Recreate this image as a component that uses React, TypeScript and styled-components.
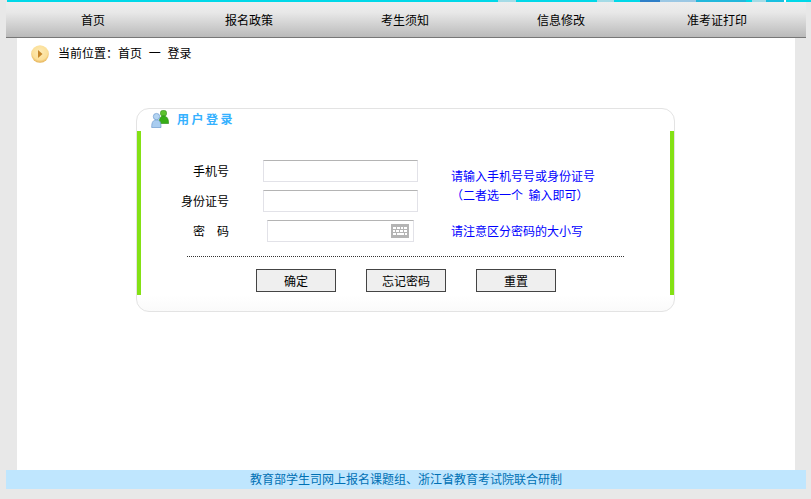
import React from "react";
import styled, { createGlobalStyle } from "styled-components";

const Global = createGlobalStyle`
  html, body { margin: 0; padding: 0; background: #e8e8e8; }
  body { font-family: "Noto Sans CJK SC", "Liberation Sans", sans-serif; font-size: 12px; color: #000; }
`;

const Page = styled.div`
  height: 499px;
  overflow: hidden;
  padding: 0 5px 0 6px;
  display: flex;
  flex-direction: column;
  box-sizing: border-box;
`;

const TopStrip = styled.div`
  height: 2px;
  flex: none;
  margin-right: -5px;
  background: linear-gradient(
    90deg,
    #e8e8e8 0 1px,
    #00d8e8 1px 492px,
    #a4dbe6 492px 510px,
    #00d8e8 510px 591px,
    #a4dbe6 591px 608px,
    #00d8e8 608px 634px,
    #2f7fc8 634px 654px,
    #9cc8e4 654px 690px,
    #22b8dc 690px 740px,
    #00d8e8 740px 746px,
    #a4dbe6 746px 760px,
    #18c0e0 760px 778px,
    #fff 778px 780px,
    #00d8e8 780px
  );
`;

const Nav = styled.nav`
  flex: none;
  height: 35px;
  padding: 0 11px 0 9px;
  display: grid;
  grid-template-columns: repeat(5, 156px);
  background: linear-gradient(180deg, #eeeeee 0, #e8e8e8 30%, #bababa 100%);
  border-bottom: 1px solid #777;
`;

const NavItem = styled.a`
  display: flex;
  align-items: center;
  justify-content: center;
  color: #000;
  font-size: 12px;
`;

const Main = styled.main`
  flex: 1;
  margin: 0 11px;
  background: #fff;
  padding: 7px 0 0 14px;
`;

const Crumb = styled.div`
  display: flex;
  align-items: center;
  gap: 9px;
  height: 18px;
  line-height: 18px;
`;

const CrumbText = styled.span`
  white-space: pre;
  word-spacing: 4px;
  margin-top: -2px;
`;

const Card = styled.section`
  width: 539px;
  height: 204px;
  box-sizing: border-box;
  margin: 45px 0 0 105px;
  border: 1px solid #e3e3e3;
  border-radius: 13px;
  background: linear-gradient(180deg, #fff 0, #fff 92%, #fafafa 100%);
  display: flex;
  flex-direction: column;
`;

const CardHead = styled.header`
  flex: none;
  height: 22px;
  padding: 1px 0 0 14px;
  display: flex;
  align-items: flex-start;
  gap: 8px;
  box-sizing: border-box;
`;

const CardTitle = styled.h2`
  margin: -1px 0 0;
  font-size: 12px;
  line-height: 20px;
  font-weight: 700;
  color: #35b1ff;
  letter-spacing: 2.5px;
`;

const CardBody = styled.div`
  flex: none;
  height: 164px;
  box-sizing: border-box;
  border-left: 4px solid #84e114;
  border-right: 4px solid #84e114;
  padding-top: 29px;
`;

const Form = styled.div`
  display: grid;
  grid-template-columns: 88px 190px auto;
  grid-auto-rows: 22px;
  row-gap: 8px;
  align-items: center;
`;

const Label = styled.label`
  text-align: right;
  white-space: pre;
  margin-top: -2px;
`;

const Field = styled.div<{ $inset?: boolean }>`
  position: relative;
  height: 22px;
  box-sizing: border-box;
  width: ${(p) => (p.$inset ? 147 : 155)}px;
  margin-left: ${(p) => (p.$inset ? 38 : 34)}px;
  border: 1px solid #e2e2e8;
  border-top-color: #b4b4b4;
  background: #fff;
`;

const KeyboardMark = styled.svg`
  position: absolute;
  right: 4px;
  top: 3px;
`;

const Hint = styled.div`
  color: #0000ff;
  line-height: 19px;
  white-space: pre;
  margin-left: 32px;
  margin-top: -2px;
`;

const HintTall = styled(Hint)`
  height: 22px;
  margin-top: 12px;
`;

const Divider = styled.hr`
  width: 437px;
  margin: 14px 0 0 46px;
  border: 0;
  border-top: 1px dotted #333;
  height: 0;
`;

const Buttons = styled.div`
  display: flex;
  gap: 30px;
  margin: 12px 0 0 115px;
`;

const Button = styled.button`
  width: 80px;
  height: 23px;
  padding: 0;
  box-sizing: border-box;
  border: 1px solid #444;
  background: #efefef;
  font: inherit;
  color: #000;
`;

const Footer = styled.footer`
  flex: none;
  height: 19px;
  line-height: 18px;
  margin-bottom: 10px;
  text-align: center;
  background: #bfe6fe;
  color: #0070b4;
`;

const ArrowIcon = () => (
  <svg width="18" height="18" viewBox="0 0 18 18" aria-hidden="true">
    <defs>
      <radialGradient id="orb" cx="50%" cy="40%" r="62%">
        <stop offset="0" stopColor="#fdebb8" />
        <stop offset="0.7" stopColor="#fbdf98" />
        <stop offset="1" stopColor="#e2ab4c" />
      </radialGradient>
    </defs>
    <circle cx="9" cy="9" r="8.8" fill="url(#orb)" />
    <path d="M7 5 L11.5 9 L7 13 Z" fill="#c6862a" />
  </svg>
);

const UsersIcon = () => (
  <svg width="18" height="18" viewBox="0 0 18 18" aria-hidden="true">
    <rect x="9.5" y="0.5" width="6" height="5.5" rx="2" fill="#5cc22f" stroke="#2f8f16" strokeWidth="0.6" />
    <path d="M8 13.5 C8 7.5 10 6 12.5 6 C15.5 6 17.6 8 17.6 13.5 Z" fill="#37ad17" stroke="#278a10" strokeWidth="0.6" />
    <circle cx="5.5" cy="6.6" r="3.2" fill="#b4d4f2" stroke="#6d9bcf" strokeWidth="0.7" />
    <path d="M0.7 17.5 C0.7 12 2 10 5.5 10 C9 10 10 12 10 17.5 Z" fill="#a9cdf0" stroke="#6d9bcf" strokeWidth="0.7" />
  </svg>
);

const KeyboardIcon = () => (
  <KeyboardMark width="18" height="14" viewBox="0 0 18 14" aria-hidden="true">
    <rect width="18" height="14" fill="#b4b4b4" />
    <path
      d="M2 3h3v2H2zM6 3h3v2H6zM10 3h2v2h-2zM13 3h3v2h-3zM2 6h2v2H2zM5 6h3v2H5zM9 6h3v2H9zM13 6h3v2h-3zM2 9h3v2H2zM6 9h7v2H6zM14 9h2v2h-2z"
      fill="#fff"
    />
  </KeyboardMark>
);

const navItems = ["首页", "报名政策", "考生须知", "信息修改", "准考证打印"];

export default function App() {
  return (
    <Page>
      <Global />
      <TopStrip />
      <Nav>
        {navItems.map((n) => (
          <NavItem key={n}>{n}</NavItem>
        ))}
      </Nav>
      <Main>
        <Crumb>
          <ArrowIcon />
          <CrumbText>当前位置：首页 一 登录</CrumbText>
        </Crumb>
        <Card>
          <CardHead>
            <UsersIcon />
            <CardTitle>用户登录</CardTitle>
          </CardHead>
          <CardBody>
            <Form>
              <Label>手机号</Label>
              <Field />
              <HintTall>{"请输入手机号号或身份证号\n（二者选一个  输入即可）"}</HintTall>
              <Label>身份证号</Label>
              <Field />
              <span />
              <Label>密　码</Label>
              <Field $inset>
                <KeyboardIcon />
              </Field>
              <Hint>请注意区分密码的大小写</Hint>
            </Form>
            <Divider />
            <Buttons>
              <Button>确定</Button>
              <Button>忘记密码</Button>
              <Button>重置</Button>
            </Buttons>
          </CardBody>
        </Card>
      </Main>
      <Footer>教育部学生司网上报名课题组、浙江省教育考试院联合研制</Footer>
    </Page>
  );
}
